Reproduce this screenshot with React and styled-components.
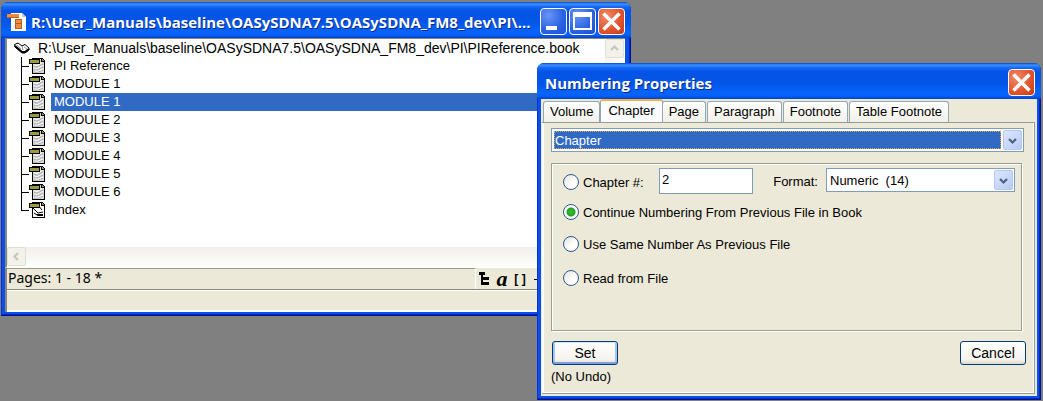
import React, { useState } from 'react'
import styled, { createGlobalStyle, css } from 'styled-components'

const GlobalStyle = createGlobalStyle`
  * { box-sizing: border-box; }
  body {
    margin: 0;
    background: #808080;
    font-family: "Liberation Sans", Arial, sans-serif;
    font-size: 13px;
    color: #000;
  }
  button, input, select { font: inherit; color: inherit; margin: 0; }
`;

const Desktop = styled.main`
  position: relative;
  min-height: 100vh;
  overflow: hidden;
`;

/* ---------- window frame ---------- */

const Window = styled.section`
  position: absolute;
  display: flex;
  flex-direction: column;
  padding: 0 4px 4px;
  border-radius: 8px 8px 0 0;
  background: #0a4fe8;
  box-shadow: inset -1px -1px 0 #00138c, inset 1px 0 0 #0831d9, inset -2px -2px 0 #0028c8;
`;

const BookFrame = styled(Window)`
  top: 2px;
  left: 1px;
  right: 412px;
`;

const DialogFrame = styled(Window)`
  top: 63px;
  left: 537px;
  right: 2px;
`;

const TitleBar = styled.header`
  display: flex;
  align-items: center;
  gap: 2px;
  height: 36px;
  margin: 0 -4px;
  padding: 3px 6px 0;
  border-radius: 7px 7px 0 0;
  background: linear-gradient(#0a45c8 0, #3c92ff 2px, #1266f4 5px, #0453e4 9px, #0455e8 20px, #0664fc 30px, #0560f8 33px, #0242c8 36px);
`;

const Title = styled.h1`
  flex: 1;
  min-width: 0;
  margin: 0 0 0 2px;
  overflow: hidden;
  white-space: nowrap;
  font-family: "Open Sans", "Noto Sans", sans-serif;
  font-size: 15px;
  font-weight: 700;
  line-height: 24px;
  color: #fff;
  text-shadow: 1px 1px 0 #0b2a86;
`;

const CaptionButton = styled.button`
  display: grid;
  place-items: center;
  width: 27px;
  height: 27px;
  padding: 0;
  border: 1px solid #fff;
  border-radius: 4px;
  background: ${p => p.$close
    ? 'radial-gradient(circle at 30% 30%, #ee8a68, #e0522c 60%, #c43a12)'
    : 'radial-gradient(circle at 30% 25%, #6a94f4, #2a62e4 60%, #1d4fd8)'};
`;

/* ---------- book window ---------- */

const Pane = styled.div`
  display: grid;
  grid-template-columns: 1fr 20px;
  margin: 0 2px 0 0;
  border: solid #8a8778;
  border-width: 1px 0 0 2px;
  background: #fff;
`;

const FileTree = styled.ul`
  height: 208px;
  margin: 0;
  padding: 0;
  list-style: none;
  overflow: hidden;
`;

const BookRow = styled.li`
  display: flex;
  align-items: center;
  gap: 8px;
  height: 18px;
  padding-left: 7px;
  font-size: 14px;
  white-space: nowrap;
`;

const FileRow = styled.li`
  display: flex;
  height: 18px;
  padding-left: 14px;
  gap: 6px;
`;

const FileName = styled.span`
  flex: 1;
  padding-left: 3px;
  line-height: 18px;
  ${p => p.$selected && css`
    background: #316ac5;
    color: #fff;
  `}
`;

const VScroll = styled.div`
  background: linear-gradient(90deg, #f4f3ee, #fefefb);
`;

const HScroll = styled.div`
  grid-column: 1 / -1;
  height: 20px;
  background: linear-gradient(#f0efea, #fefefb);
`;

const ScrollButton = styled.button`
  display: grid;
  place-items: center;
  width: 19px;
  height: 19px;
  padding: 0;
  border: 1px solid #e0dfd6;
  border-radius: 2px;
  background: #f2f1ea;
`;

const StatusBar = styled.footer`
  display: flex;
  height: 22px;
  margin-right: 2px;
  border-top: 1px solid #fff;
  border-left: 2px solid #8a8778;
  background: #ece9d8;
`;

const Pages = styled.span`
  width: 469px;
  padding-left: 1px;
  border-top: 1px solid #9d9a8b;
  border-right: 1px solid #fff;
  font-family: "Noto Sans", "Open Sans", sans-serif;
  font-size: 14px;
  line-height: 18px;
`;

const StatusTools = styled.div`
  display: flex;
  align-items: center;
  gap: 4px;
  padding-left: 1px;
`;

const ToolButton = styled.button`
  display: grid;
  place-items: center;
  width: 14px;
  height: 20px;
  padding: 0;
  border: 0;
  background: none;
  font-family: ${p => p.$serif ? '"Liberation Serif", serif' : '"Liberation Sans", sans-serif'};
  font-size: ${p => p.$serif ? '22px' : '12px'};
  font-style: ${p => p.$serif ? 'italic' : 'normal'};
  font-weight: 700;
  line-height: 16px;
  white-space: pre;
`;

const MessageBar = styled.div`
  height: 23px;
  margin-right: 2px;
  border: solid #8a8778;
  border-width: 1px 0 0 2px;
  background: #ece9d8;
  box-shadow: inset 0 1px 0 #fff, inset 0 -2px 0 #fff;
`;

/* ---------- numbering dialog ---------- */

const DialogBody = styled.form`
  display: flex;
  flex-direction: column;
  padding: 0 2px 2px 1px;
  background: #ece9d8;
`;

const Tabs = styled.div`
  display: flex;
  align-items: flex-end;
  height: 23px;
  padding-left: 1px;
`;

const Tab = styled.button`
  height: 21px;
  padding: 0 6px;
  border: 1px solid #91a7b4;
  border-bottom: 0;
  border-radius: 3px 3px 0 0;
  background: linear-gradient(#fff, #f1f0e8);
  line-height: 20px;
  white-space: nowrap;
  margin-right: 1px;
  ${p => p.$active && css`
    height: 24px;
    padding: 0 7px 2px;
    margin: 0 -1px -1px -1px;
    border-top: 2px solid #fbb040;
    background: #fcfcfe;
  `}
`;

const TabPanel = styled.div`
  display: flex;
  flex-direction: column;
  padding: 5px 10px 7px 9px;
  border: solid #919b9c;
  border-width: 1px 1px 1px 0;
  box-shadow: inset 2px 0 0 #fcfcfa, inset -1px -1px 0 #fff;
`;

const Combo = styled.div`
  display: grid;
  align-items: center;
  height: 24px;
  padding: 1px;
  border: 1px solid #7f9db9;
  background: #fff;
  > * { grid-area: 1 / 1; }
`;

const ComboSelect = styled.select`
  height: 18px;
  width: 100%;
  padding: 0 2px;
  border: 0;
  border-radius: 0;
  appearance: none;
  background: #fff;
  outline: none;
`;

const MainSelect = styled(ComboSelect)`
  width: calc(100% - 22px);
  height: 18px;
  margin-left: 1px;
  padding: 0;
  border: 1px dotted #e0a840;
  background: #316ac5;
  color: #fff;
  option { background: #fff; color: #000; }
`;

const ComboArrow = styled.span`
  display: grid;
  place-items: center;
  justify-self: end;
  width: 19px;
  height: 20px;
  border: 1px solid #b4c8f6;
  border-radius: 2px;
  background: linear-gradient(135deg, #dce6fe, #b8cbf6);
  pointer-events: none;
`;

const Group = styled.fieldset`
  display: flex;
  flex-direction: column;
  height: 168px;
  min-width: 0;
  margin: 11px 2px 0 0;
  padding: 4px 6px 0 11px;
  border: 1px solid #a09d8e;
  box-shadow: 1px 1px 0 #fff, inset 1px 1px 0 #fff;
`;

const ChapterRow = styled.div`
  display: flex;
  align-items: flex-start;
  height: 29px;
`;

const RadioLabel = styled.label`
  display: flex;
  align-items: center;
  gap: 4px;
  height: ${p => p.$tall ? '34px' : '30px'};
  white-space: nowrap;
`;

const Radio = styled.input`
  appearance: none;
  flex: none;
  width: 16px;
  height: 16px;
  border: 1px solid #2c5a8c;
  border-radius: 50%;
  background: linear-gradient(135deg, #e2e2dc, #fff 60%);
  &:checked {
    background: radial-gradient(circle, #3cc23c 0, #21a121 4px, #fff 5px);
  }
`;

const ChapterLabel = styled(RadioLabel)`
  width: 96px;
  height: 28px;
`;

const NumberInput = styled.input`
  width: 94px;
  height: 26px;
  padding: 0 2px 3px;
  border: 1px solid #7f9db9;
  background: #fff;
`;

const FormatLabel = styled.label`
  margin: 0 8px 0 auto;
  line-height: 28px;
`;

const FormatCombo = styled(Combo)`
  width: 189px;
`;

const Actions = styled.div`
  display: flex;
  justify-content: space-between;
  margin: 10px -2px 0 1px;
`;

const PushButton = styled.button`
  width: 66px;
  height: 24px;
  padding: 0;
  border: 1px solid #003c74;
  border-radius: 3px;
  background: linear-gradient(#fff, #f4f3ee 80%, #dcd8cc);
  font-size: 14px;
  box-shadow: ${p => p.$primary ? 'inset 0 1px 0 #cee7ff, inset 0 -2px 0 #7f9fe4, inset 2px 0 0 #a8c4f0, inset -2px 0 0 #a8c4f0' : 'none'};
`;

const Hint = styled.p`
  margin: 4px 0 1px;
  line-height: 16px;
`;

/* ---------- icons ---------- */

const AppIcon = () => (
  <svg width="20" height="20" viewBox="0 0 20 20" aria-hidden="true">
    <path d="M4 1h11l4 4v14H4z" fill="#fff" />
    <path d="M15 1v4h4z" fill="#c9c9c9" />
    <path d="M0 2h12v4H0z" fill="#ee8c3c" />
    <path d="M0 5h12v1H0z" fill="#b5601c" />
    <path d="M8 7h7v10H8z" fill="#b5601c" />
    <path d="M9 8h5v3H9zM9 12h5v4H9z" fill="#ee8c3c" />
  </svg>
)

const BookIcon = () => (
  <svg width="16" height="12" viewBox="0 0 16 12" aria-hidden="true">
    <path d="M0.500 2.500L4 1l2 1.500L8 4l3-1.500 4 3.500v2l-4 3H8L1 5z" fill="#fff" stroke="#000" />
    <path d="M1 4l7 6h3l4-3" fill="none" stroke="#000" strokeWidth="2" />
    <path d="M8 4l1 4M3 3l4 4M10 5l3 2" stroke="#999" />
  </svg>
)

const BranchIcon = ({ last, generated }) => (
  <svg width="24" height="18" viewBox="0 0 24 18" shapeRendering="crispEdges" aria-hidden="true">
    <path d={last ? 'M0 0h1v10H0z' : 'M0 0h1v18H0z'} />
    <path d="M0 9h8v1H0z" />
    <path d="M11 1h10l3 3v13H11z" />
    <path d="M12 2h8v3h3v11H12z" fill={generated ? '#fff' : '#d8d8d8'} />
    <path d="M21 2v2h2z" fill="#99993a" />
    {generated ? (
      <g shapeRendering="auto">
        <path d="M12 7l5 5 5-1M17 4l4 5M13 12l3 2h6" fill="none" stroke="#000" />
        <path d="M15 13h7v2h-5z" />
      </g>
    ) : (
      <g shapeRendering="auto" fill="none" stroke="#a4a4a4">
        <path d="M13 9c3 3 6-1 9-2M13 12c3 3 6-1 9-2M13 15c3 1 6-1 9-2" />
        <path d="M13 7.500c3 2 5 0 8-2M13 10.500c3 3 6-1 9-2M14 14c3 1 5-1 8-2" stroke="#fff" />
      </g>
    )}
    <path d="M8 2h11v5H8z" />
    <path d="M9 3h9v3H9z" fill="#9a9a38" />
  </svg>
)

const Chevron = ({ dir, color }) => {
  const turn = { down: 0, left: 90, up: 180 }[dir]
  return (
    <svg width="11" height="11" viewBox="0 0 11 11" aria-hidden="true">
      <path d="M2 4l3.500 3.500L9 4" fill="none" stroke={color} strokeWidth="2.200" transform={`rotate(${turn} 5.500 5.500)`} />
    </svg>
  )
}

const CloseIcon = () => (
  <svg width="21" height="21" viewBox="0 0 21 21" aria-hidden="true">
    <path d="M2.500 2.500l16 16M18.500 2.500l-16 16" stroke="#fff" strokeWidth="3.500" />
  </svg>
)

const files = ['PI Reference', 'MODULE 1', 'MODULE 1', 'MODULE 2', 'MODULE 3', 'MODULE 4', 'MODULE 5', 'MODULE 6', 'Index']
const tabs = ['Volume', 'Chapter', 'Page', 'Paragraph', 'Footnote', 'Table Footnote']

function BookWindow() {
  const [selected, setSelected] = useState(2)

  return (
    <BookFrame>
      <TitleBar>
        <AppIcon />
        <Title>R:\User_Manuals\baseline\OASySDNA7.5\OASySDNA_FM8_dev\PI\...</Title>
        <CaptionButton aria-label="Minimize">
          <svg width="21" height="21"><path d="M3 15h11v4H3z" fill="#fff" /></svg>
        </CaptionButton>
        <CaptionButton aria-label="Maximize">
          <svg width="21" height="21"><path d="M1 1h19v18H1zM3 6v11h15V6z" fill="#fff" fillRule="evenodd" /></svg>
        </CaptionButton>
        <CaptionButton $close aria-label="Close"><CloseIcon /></CaptionButton>
      </TitleBar>
      <Pane>
        <FileTree>
          <BookRow><BookIcon />R:\User_Manuals\baseline\OASySDNA7.5\OASySDNA_FM8_dev\PI\PIReference.book</BookRow>
          {files.map((name, i) => (
            <FileRow key={i} onClick={() => setSelected(i)}>
              <BranchIcon last={i === files.length - 1} generated={name === 'Index'} />
              <FileName $selected={i === selected}>{name}</FileName>
            </FileRow>
          ))}
        </FileTree>
        <VScroll>
          <ScrollButton aria-label="Scroll up"><Chevron dir="up" color="#c9c7ba" /></ScrollButton>
        </VScroll>
        <HScroll>
          <ScrollButton aria-label="Scroll left"><Chevron dir="left" color="#c9c7ba" /></ScrollButton>
        </HScroll>
      </Pane>
      <StatusBar>
        <Pages>Pages: 1 - 18 *</Pages>
        <StatusTools>
          <ToolButton aria-label="Show structure">
            <svg width="11" height="13" viewBox="0 0 11 13" shapeRendering="crispEdges">
              <path d="M0 0h6v3H4v2h6v3H4v2h6v3H2V3H0z" />
              <path d="M4 8h6v1H4z" fill="#ece9d8" />
            </svg>
          </ToolButton>
          <ToolButton $serif>a</ToolButton>
          <ToolButton>[ ]</ToolButton>
          <ToolButton aria-label="Move">
            <svg width="14" height="12"><path d="M3 6h11v1H3z" /></svg>
          </ToolButton>
        </StatusTools>
      </StatusBar>
      <MessageBar />
    </BookFrame>
  )
}

function NumberingDialog() {
  const [tab, setTab] = useState('Chapter')

  return (
    <DialogFrame>
      <TitleBar>
        <Title>Numbering Properties</Title>
        <CaptionButton $close aria-label="Close"><CloseIcon /></CaptionButton>
      </TitleBar>
      <DialogBody onSubmit={e => e.preventDefault()}>
        <Tabs role="tablist">
          {tabs.map(name => (
            <Tab key={name} type="button" role="tab" aria-selected={name === tab} $active={name === tab} onClick={() => setTab(name)}>
              {name}
            </Tab>
          ))}
        </Tabs>
        <TabPanel>
          <Combo>
            <MainSelect aria-label="Numbering type">
              <option>Chapter</option>
            </MainSelect>
            <ComboArrow><Chevron dir="down" color="#4d6185" /></ComboArrow>
          </Combo>
          <Group>
            <ChapterRow>
              <ChapterLabel><Radio type="radio" name="mode" />Chapter #:</ChapterLabel>
              <NumberInput aria-label="Chapter number" defaultValue="2" />
              <FormatLabel htmlFor="format">Format:</FormatLabel>
              <FormatCombo>
                <ComboSelect id="format">
                  <option>Numeric&nbsp; (14)</option>
                </ComboSelect>
                <ComboArrow><Chevron dir="down" color="#4d6185" /></ComboArrow>
              </FormatCombo>
            </ChapterRow>
            <RadioLabel><Radio type="radio" name="mode" defaultChecked />Continue Numbering From Previous File in Book</RadioLabel>
            <RadioLabel $tall><Radio type="radio" name="mode" />Use Same Number As Previous File</RadioLabel>
            <RadioLabel $tall><Radio type="radio" name="mode" />Read from File</RadioLabel>
          </Group>
          <Actions>
            <PushButton $primary type="submit">Set</PushButton>
            <PushButton type="button">Cancel</PushButton>
          </Actions>
          <Hint>(No Undo)</Hint>
        </TabPanel>
      </DialogBody>
    </DialogFrame>
  )
}

export default function App() {
  return (
    <Desktop>
      <GlobalStyle />
      <BookWindow />
      <NumberingDialog />
    </Desktop>
  )
}
